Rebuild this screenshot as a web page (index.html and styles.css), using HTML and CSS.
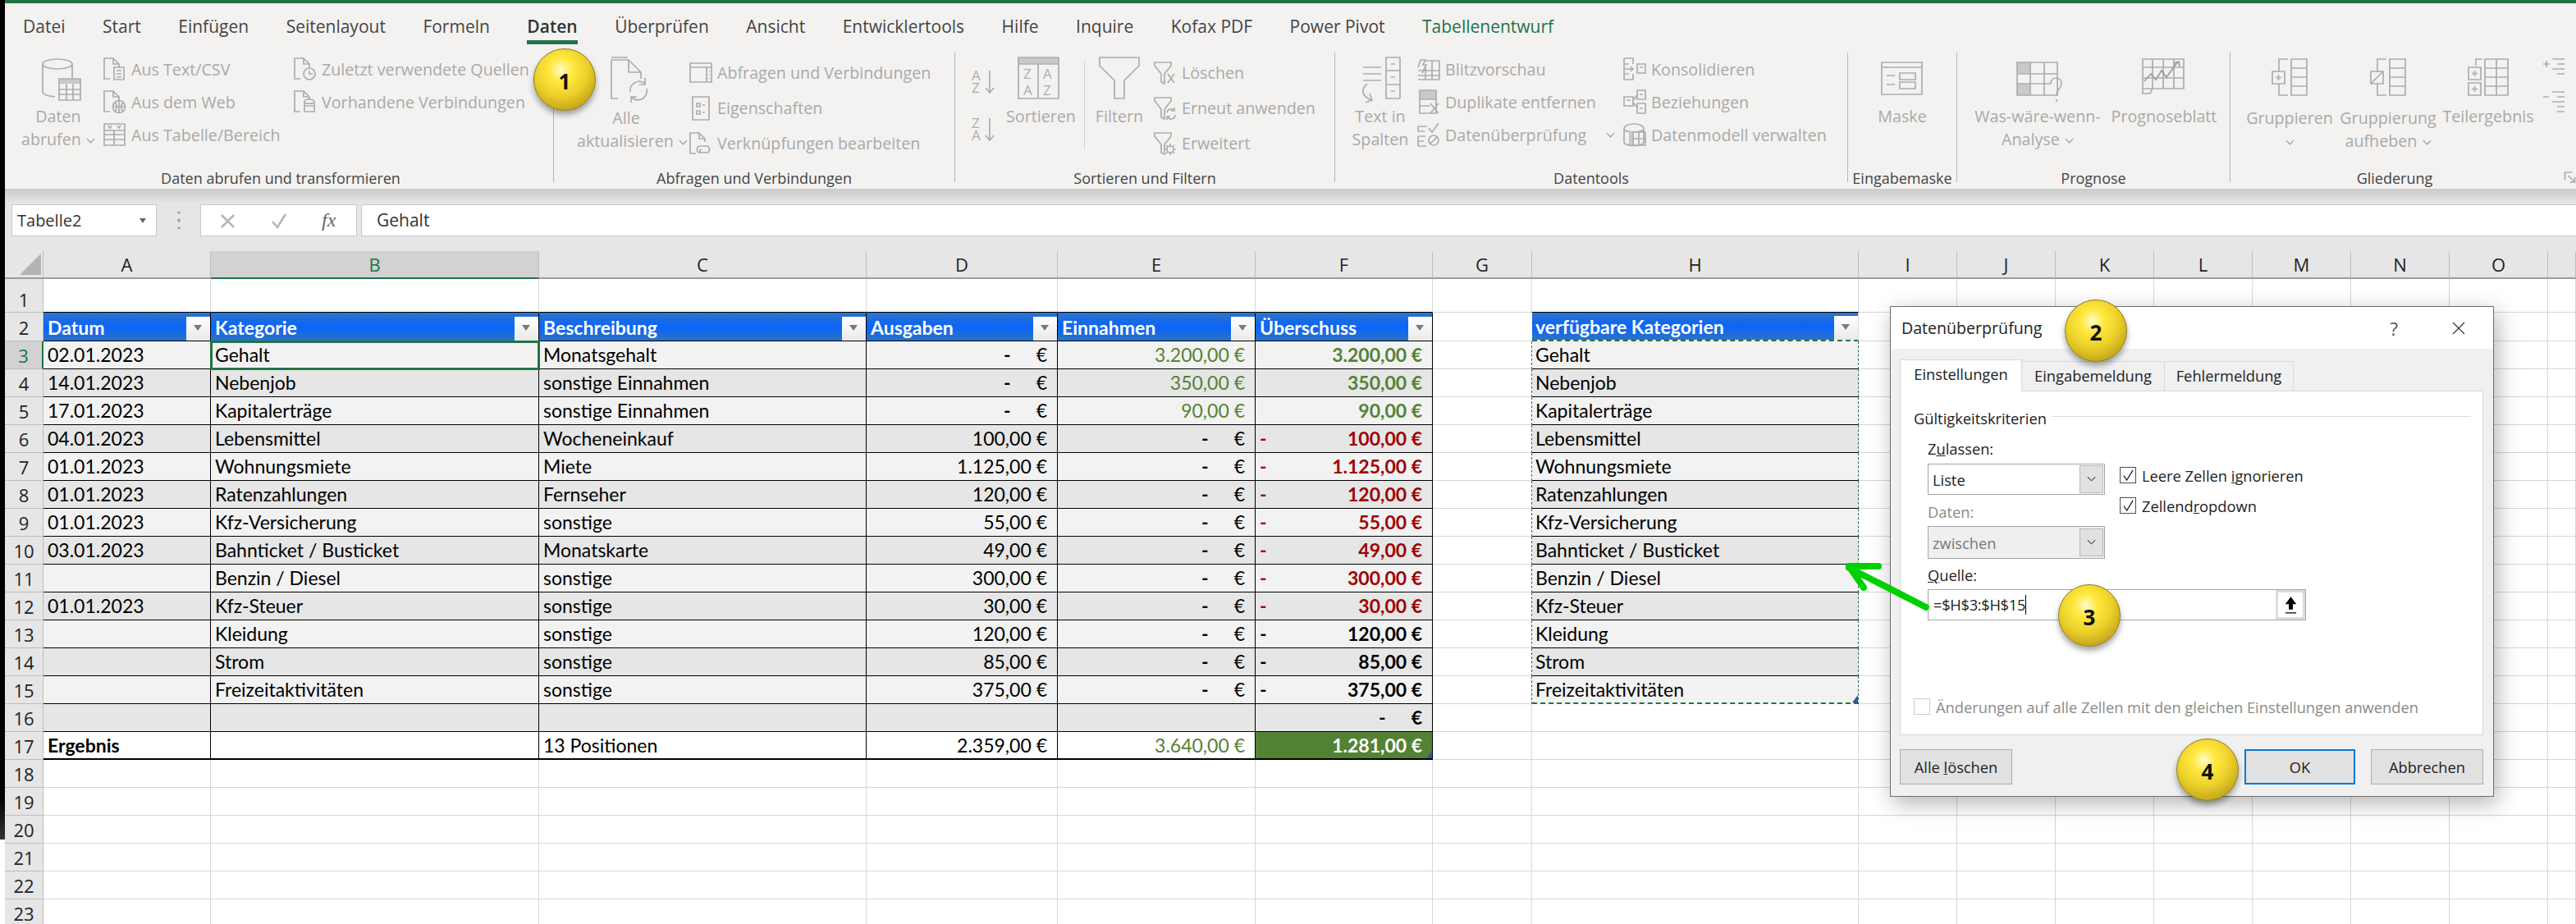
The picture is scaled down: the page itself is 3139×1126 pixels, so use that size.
FILE: index.html
```html
<!DOCTYPE html>
<html lang="de">
<head>
  <meta charset="UTF-8">
  <title>Datenüberprüfung</title>
  <link rel="stylesheet" href="styles.css">
</head>
<body>
  <!-- shared icon parts -->
  <svg class="defs">
    <defs>
      <path id="doc" d="M9 27H2V2h11l7 7v4M13 2v7h7"/>
      <path id="fun" d="M2 2h20v4l-8 10v12l-4-2V16L2 6z"/>
      <path id="bigcol" d="M30 4h19v44H30zM30 15h19M30 26h19M30 37h19"/>
    </defs>
  </svg>
  <div class="strip"></div>

  <div class="app">
    <div class="titlebar"></div>
    <nav class="tabs">
      <span>Datei</span><span>Start</span><span>Einfügen</span><span>Seitenlayout</span><span>Formeln</span>
      <span class="on">Daten</span><span>Überprüfen</span><span>Ansicht</span><span>Entwicklertools</span>
      <span>Hilfe</span><span>Inquire</span><span>Kofax PDF</span><span>Power Pivot</span><span class="ctx">Tabellenentwurf</span>
    </nav>

    <div class="ribbon">
      <section class="group g1">
        <div class="group-body">
          <div class="big w98">
            <svg class="ic" viewBox="0 0 56 58"><ellipse cx="27" cy="10" rx="18" ry="6"/><path d="M9 10v34c0 3 6 5 15 6M45 10v18"/><path class="solid" d="M29 28h26v6H29z"/><path d="M29 28h26v26H29zM29 41h26M29 47h26M38 34v20M46 34v20"/></svg>
            <div>Daten</div><div>abrufen <i class="chev"></i></div>
          </div>
          <div class="col w232 ml5">
            <div class="row"><svg class="ics" viewBox="0 0 30 30"><use href="#doc"/><path d="M14 13h12v15H14zM17 17h6M17 21h6M17 25h6"/></svg>Aus Text/CSV</div>
            <div class="row"><svg class="ics" viewBox="0 0 30 30"><use href="#doc"/><circle cx="20" cy="21" r="7.500"/><path d="M12 21h15M20 13.500v15M15 15c3 4 3 9 0 12M25 15c-3 4-3 9 0 12"/></svg>Aus dem Web</div>
            <div class="row"><svg class="ics" viewBox="0 0 30 30"><path d="M2 2h25v26H2zM2 10h25M2 15h25M2 21h25M14 10v18M7 4l2 3 2-3M18 4l2 3 2-3"/></svg>Aus Tabelle/Bereich</div>
          </div>
          <div class="col">
            <div class="row"><svg class="ics" viewBox="0 0 30 30"><use href="#doc"/><circle cx="20" cy="21" r="7"/><path d="M20 17v4h4"/></svg>Zuletzt verwendete Quellen</div>
            <div class="row"><svg class="ics" viewBox="0 0 30 30"><use href="#doc"/><path d="M14 15c0-4 12-4 12 0v12H14zM14 15c0 3 12 3 12 0M14 20h12"/></svg>Vorhandene Verbindungen</div>
          </div>
        </div>
        <div class="group-label">Daten abrufen und transformieren</div>
      </section>

      <section class="group g2">
        <div class="group-body">
          <div class="big w120 low">
            <svg class="ic" viewBox="0 0 56 58"><path d="M18 52H10V5h21l15 15v8M31 5v15h15M10 2h20"/><path d="M33 44a11 11 0 0 1 18-10M53 40a11 11 0 0 1-18 11M51 27v8h-7M34 57v-7h7"/></svg>
            <div>Alle</div><div>aktualisieren <i class="chev"></i></div>
          </div>
          <div class="col tall ml16">
            <div class="row"><svg class="ics" viewBox="0 0 30 30"><path d="M2 3h26v23H2zM2 8h26M22 8v18M25 12v1M25 17v1M25 21v1"/></svg>Abfragen und Verbindungen</div>
            <div class="row"><svg class="ics" viewBox="0 0 30 30"><path d="M5 1h20v28H5zM10 9h4v4h-4zM10 18h4v4h-4zM17 11h3M17 20h3"/></svg>Eigenschaften</div>
            <div class="row"><svg class="ics" viewBox="0 0 30 30"><use href="#doc"/><path d="M14 26c-5 0-5-8 1-8h6c6 0 6 8 1 8h-6c-3 0-3-4 0-4"/></svg>Verknüpfungen bearbeiten</div>
          </div>
        </div>
        <div class="group-label">Abfragen und Verbindungen</div>
      </section>

      <section class="group g3">
        <div class="group-body">
          <div class="sort-col">
            <svg class="ic-sort" viewBox="0 0 32 30"><text x="1" y="13">A</text><text x="1" y="28">Z</text><path d="M23 1v27M18 22l5 6 5-6"/></svg>
            <svg class="ic-sort" viewBox="0 0 32 30"><text x="1" y="13">Z</text><text x="1" y="28">A</text><path d="M23 1v27M18 22l5 6 5-6"/></svg>
          </div>
          <div class="big w80 ml11">
            <svg class="ic" viewBox="0 0 56 58"><path class="solid" d="M3 2h49v8H3z"/><path d="M3 2h49v50H3zM3 10h49M27 10v42"/><text x="9" y="28">Z</text><text x="9" y="48">A</text><text x="33" y="28">A</text><text x="33" y="48">Z</text></svg>
            <div>Sortieren</div>
          </div>
          <div class="thin"></div>
          <div class="big w76 ml4">
            <svg class="ic" viewBox="0 0 56 58"><path d="M4 2h48v10L34 30v22H22V30L4 12zM4 2"/></svg>
            <div>Filtern</div>
          </div>
          <div class="col tall ml3">
            <div class="row"><svg class="ics" viewBox="0 0 30 30"><use href="#fun"/><path d="M18 16l8 11M26 16l-8 11"/></svg>Löschen</div>
            <div class="row"><svg class="ics" viewBox="0 0 30 30"><use href="#fun"/><path d="M17 20a5 5 0 0 1 9-2M27 23a5 5 0 0 1-9 3M26 14v4h-4M17 29v-4h4"/></svg>Erneut anwenden</div>
            <div class="row"><svg class="ics" viewBox="0 0 30 30"><use href="#fun"/><circle cx="21" cy="22" r="4"/><path d="M21 15v3M21 26v3M14 22h3M25 22h3M16 17l2 2M24 25l2 2M16 27l2-2M24 19l2-2"/></svg>Erweitert</div>
          </div>
        </div>
        <div class="group-label">Sortieren und Filtern</div>
      </section>

      <section class="group g4">
        <div class="group-body">
          <div class="big w88">
            <svg class="ic" viewBox="0 0 56 58"><path d="M35 2h17v50H35zM35 18h17M35 35h17M41 10h5M41 26h5M41 43h5M7 14h22M7 22h22M7 30h22"/><path d="M12 34c-8 7-7 15 5 20M15 46l3 8-8 3"/></svg>
            <div>Text in</div><div>Spalten</div>
          </div>
          <div class="col w251">
            <div class="row"><svg class="ics" viewBox="0 0 30 30"><path d="M2 17h26M2 23h26M11 11v17M19 5v23M2 28h26M28 5v23M12 5h16M2 13l3-9h6l-3 6h4L7 20"/></svg>Blitzvorschau</div>
            <div class="row"><svg class="ics" viewBox="0 0 30 30"><path class="solid" d="M4 1h20v11H4z"/><path d="M4 1h20v28H4zM4 12h20M4 20h12M17 17l10 12M27 17L17 29"/></svg>Duplikate entfernen</div>
            <div class="row"><svg class="ics" viewBox="0 0 30 30"><path d="M2 5h11M2 11h8M2 17h9M2 23h7M2 29h10M2 5v6M2 17v12M15 7l4 5 8-11"/><circle cx="21" cy="22" r="6"/><path d="M17 26l8-8"/></svg>Datenüberprüfung <i class="chev far"></i></div>
          </div>
          <div class="col">
            <div class="row"><svg class="ics" viewBox="0 0 30 30"><path d="M2 2h11v7M2 2v26h11v-7M2 9h6M2 21h6M3 15h10M10 12l3 3-3 3M18 9h10v11H18zM21 13h4"/></svg>Konsolidieren</div>
            <div class="row"><svg class="ics" viewBox="0 0 30 30"><path d="M2 9h11v11H2zM5 13h5M18 1h10v11H18zM18 17h10v12H18zM21 6h4M21 23h4M13 13l5-6M13 16l5 6"/></svg>Beziehungen</div>
            <div class="row"><svg class="ics" viewBox="0 0 30 30"><path d="M2 8c0-8 24-8 24 0v16c0 6-24 6-24 0zM2 8c0 5 24 5 24 0M13 12h15v16H13zM20 12v16M13 20h15"/><path class="solid" d="M8 11h4v16H8z"/></svg>Datenmodell verwalten</div>
          </div>
        </div>
        <div class="group-label">Datentools</div>
      </section>

      <section class="group g5">
        <div class="group-body">
          <div class="big w130">
            <svg class="ic" viewBox="0 0 56 58"><path d="M3 8h49v39H3zM3 14h49M9 24h10M9 35h10M25 21h19v8H25zM25 32h19v8H25z"/></svg>
            <div>Maske</div>
          </div>
        </div>
        <div class="group-label">Eingabemaske</div>
      </section>

      <section class="group g6">
        <div class="group-body">
          <div class="big w170">
            <svg class="ic" viewBox="0 0 56 58"><path class="solid" d="M3 8h16v14H3zM3 34h16v14H3z"/><path d="M3 8h49v40H3zM3 22h49M3 34h42M19 8v40M36 8v40"/><path class="cut" d="M44 34c0-9 13-9 13 0 0 6-6 6-6 14M51 53v3"/></svg>
            <div>Was-wäre-wenn-</div><div>Analyse <i class="chev"></i></div>
          </div>
          <div class="big w138">
            <svg class="ic" viewBox="0 0 56 58"><path d="M2 4h50v36H2zM2 14h50M2 27h50M14 4v36M27 4v36M40 4v36M14 40l-3 6H2v-6"/><path class="dark" d="M4 31l8-9 6 7 7-11 6 8 14-19M40 9l6-2 1 6"/></svg>
            <div>Prognoseblatt</div>
          </div>
        </div>
        <div class="group-label">Prognose</div>
      </section>

      <section class="group g7">
        <div class="group-body">
          <div class="big w120 low">
            <svg class="ic" viewBox="0 0 56 58"><use href="#bigcol"/><path d="M26 4H15v16M15 34v14h11"/><path d="M7 19h15v15H7zM14.500 23v7M11 26.500h7"/></svg>
            <div>Gruppieren</div>
            <div><i class="chev"></i></div>
          </div>
          <div class="big w120 low">
            <svg class="ic" viewBox="0 0 56 58"><use href="#bigcol"/><path d="M26 4H15v16M15 34v14h11"/><path d="M7 19h15v15H7zM8 33l13-13"/></svg>
            <div>Gruppierung</div><div>aufheben <i class="chev"></i></div>
          </div>
          <div class="big w124">
            <svg class="ic" viewBox="0 0 56 58"><path d="M24 4h28v44H24zM24 15h28M24 26h28M24 37h28M38 4v44M21 4h-8v8"/><path d="M4 14h15v15H4zM4 33h15v15H4zM11.500 18v7M8 21.500h7M11.500 37v7M8 40.500h7"/></svg>
            <div>Teilergebnis</div>
          </div>
          <div class="outline-col">
            <svg class="ics" viewBox="0 0 30 30"><path d="M1 8h8M5 4v8M12 2h15M18 8h9M12 14h15M18 20h9"/></svg>
            <svg class="ics" viewBox="0 0 30 30"><path d="M1 8h7M12 2h15M18 8h9M12 14h15M18 20h9M18 26h9"/></svg>
          </div>
        </div>
        <div class="group-label">Gliederung</div>
      </section>
      <svg class="launcher" viewBox="0 0 14 14"><path d="M1 10V1h9M5 5l8 8M13 7v6H7"/></svg>
    </div>

    <div class="formula-bar">
      <div class="namebox"><span>Tabelle2</span><i class="tri"></i></div>
      <div class="grip"></div>
      <div class="fn-box">
        <svg class="fx-ic" viewBox="0 0 20 20"><path d="M2 3l15 15M17 3L2 18"/></svg>
        <svg class="fx-ic" viewBox="0 0 20 20"><path d="M2 11l6 7L18 2"/></svg>
        <em>fx</em>
      </div>
      <div class="fx-input">Gehalt</div>
    </div>

    <div class="sheet">
      <table class="grid">
        <colgroup>
          <col class="c-head"><col class="c-a"><col class="c-b"><col class="c-c"><col class="c-d"><col class="c-e"><col class="c-f"><col class="c-g"><col class="c-h">
          <col class="c-n"><col class="c-n"><col class="c-n"><col class="c-n"><col class="c-n"><col class="c-n"><col class="c-n"><col class="c-p">
        </colgroup>
        <tr class="letters">
          <th><i class="corner-tri"></i></th><th>A</th><th class="sel-h">B</th><th>C</th><th>D</th><th>E</th><th>F</th><th>G</th><th>H</th><th>I</th><th>J</th><th>K</th><th>L</th><th>M</th><th>N</th><th>O</th><th></th>
        </tr>
        <tr class="first"><th>1</th><td></td><td></td><td></td><td></td><td></td><td></td><td></td><td></td><td></td><td></td><td></td><td></td><td></td><td></td><td></td><td></td></tr>
        <tr class="hdr"><th>2</th>
          <td><div class="hd"><span>Datum</span><i class="filter"></i></div></td>
          <td><div class="hd"><span>Kategorie</span><i class="filter"></i></div></td>
          <td><div class="hd"><span>Beschreibung</span><i class="filter"></i></div></td>
          <td><div class="hd"><span>Ausgaben</span><i class="filter"></i></div></td>
          <td><div class="hd"><span>Einnahmen</span><i class="filter"></i></div></td>
          <td><div class="hd"><span>Überschuss</span><i class="filter"></i></div></td>
          <td></td>
          <td><div class="hd"><span>verfügbare Kategorien</span><i class="filter"></i></div></td>
          <td></td><td></td><td></td><td></td><td></td><td></td><td></td><td></td></tr>
        <tr class="lt ants"><th class="sel-r">3</th><td class="sel-l">02.01.2023</td><td class="sel-c">Gehalt</td><td>Monatsgehalt</td><td class="n"><b>-</b><i class="gap"></i>€</td><td class="n pos">3.200,00 €</td><td class="n strong pos">3.200,00 €</td><td></td><td>Gehalt</td><td></td><td></td><td></td><td></td><td></td><td></td><td></td><td></td></tr>
        <tr class="dk ants"><th>4</th><td>14.01.2023</td><td>Nebenjob</td><td>sonstige Einnahmen</td><td class="n"><b>-</b><i class="gap"></i>€</td><td class="n pos">350,00 €</td><td class="n strong pos">350,00 €</td><td></td><td>Nebenjob</td><td></td><td></td><td></td><td></td><td></td><td></td><td></td><td></td></tr>
        <tr class="lt ants"><th>5</th><td>17.01.2023</td><td>Kapitalerträge</td><td>sonstige Einnahmen</td><td class="n"><b>-</b><i class="gap"></i>€</td><td class="n pos">90,00 €</td><td class="n strong pos">90,00 €</td><td></td><td>Kapitalerträge</td><td></td><td></td><td></td><td></td><td></td><td></td><td></td><td></td></tr>
        <tr class="dk ants"><th>6</th><td>04.01.2023</td><td>Lebensmittel</td><td>Wocheneinkauf</td><td class="n">100,00 €</td><td class="n"><b>-</b><i class="gap"></i>€</td><td class="n strong neg"><span class="sign">-</span>100,00 €</td><td></td><td>Lebensmittel</td><td></td><td></td><td></td><td></td><td></td><td></td><td></td><td></td></tr>
        <tr class="lt ants"><th>7</th><td>01.01.2023</td><td>Wohnungsmiete</td><td>Miete</td><td class="n">1.125,00 €</td><td class="n"><b>-</b><i class="gap"></i>€</td><td class="n strong neg"><span class="sign">-</span>1.125,00 €</td><td></td><td>Wohnungsmiete</td><td></td><td></td><td></td><td></td><td></td><td></td><td></td><td></td></tr>
        <tr class="dk ants"><th>8</th><td>01.01.2023</td><td>Ratenzahlungen</td><td>Fernseher</td><td class="n">120,00 €</td><td class="n"><b>-</b><i class="gap"></i>€</td><td class="n strong neg"><span class="sign">-</span>120,00 €</td><td></td><td>Ratenzahlungen</td><td></td><td></td><td></td><td></td><td></td><td></td><td></td><td></td></tr>
        <tr class="lt ants"><th>9</th><td>01.01.2023</td><td>Kfz-Versicherung</td><td>sonstige</td><td class="n">55,00 €</td><td class="n"><b>-</b><i class="gap"></i>€</td><td class="n strong neg"><span class="sign">-</span>55,00 €</td><td></td><td>Kfz-Versicherung</td><td></td><td></td><td></td><td></td><td></td><td></td><td></td><td></td></tr>
        <tr class="dk ants"><th>10</th><td>03.01.2023</td><td>Bahnticket / Busticket</td><td>Monatskarte</td><td class="n">49,00 €</td><td class="n"><b>-</b><i class="gap"></i>€</td><td class="n strong neg"><span class="sign">-</span>49,00 €</td><td></td><td>Bahnticket / Busticket</td><td></td><td></td><td></td><td></td><td></td><td></td><td></td><td></td></tr>
        <tr class="lt ants"><th>11</th><td></td><td>Benzin / Diesel</td><td>sonstige</td><td class="n">300,00 €</td><td class="n"><b>-</b><i class="gap"></i>€</td><td class="n strong neg"><span class="sign">-</span>300,00 €</td><td></td><td>Benzin / Diesel</td><td></td><td></td><td></td><td></td><td></td><td></td><td></td><td></td></tr>
        <tr class="dk ants"><th>12</th><td>01.01.2023</td><td>Kfz-Steuer</td><td>sonstige</td><td class="n">30,00 €</td><td class="n"><b>-</b><i class="gap"></i>€</td><td class="n strong neg"><span class="sign">-</span>30,00 €</td><td></td><td>Kfz-Steuer</td><td></td><td></td><td></td><td></td><td></td><td></td><td></td><td></td></tr>
        <tr class="lt ants"><th>13</th><td></td><td>Kleidung</td><td>sonstige</td><td class="n">120,00 €</td><td class="n"><b>-</b><i class="gap"></i>€</td><td class="n strong"><span class="sign">-</span>120,00 €</td><td></td><td>Kleidung</td><td></td><td></td><td></td><td></td><td></td><td></td><td></td><td></td></tr>
        <tr class="dk ants"><th>14</th><td></td><td>Strom</td><td>sonstige</td><td class="n">85,00 €</td><td class="n"><b>-</b><i class="gap"></i>€</td><td class="n strong"><span class="sign">-</span>85,00 €</td><td></td><td>Strom</td><td></td><td></td><td></td><td></td><td></td><td></td><td></td><td></td></tr>
        <tr class="lt ants ants-end"><th>15</th><td></td><td>Freizeitaktivitäten</td><td>sonstige</td><td class="n">375,00 €</td><td class="n"><b>-</b><i class="gap"></i>€</td><td class="n strong"><span class="sign">-</span>375,00 €</td><td></td><td class="mark">Freizeitaktivitäten</td><td></td><td></td><td></td><td></td><td></td><td></td><td></td><td></td></tr>
        <tr class="dk"><th>16</th><td></td><td></td><td></td><td></td><td></td><td class="n strong"><b>-</b><i class="gap"></i>€</td><td></td><td></td><td></td><td></td><td></td><td></td><td></td><td></td><td></td><td></td></tr>
        <tr class="sum"><th>17</th><td class="strong">Ergebnis</td><td></td><td>13 Positionen</td><td class="n">2.359,00 €</td><td class="n pos">3.640,00 €</td><td class="n strong total mark">1.281,00 €</td><td></td><td></td><td></td><td></td><td></td><td></td><td></td><td></td><td></td><td></td></tr>
        <tr><th>18</th><td></td><td></td><td></td><td></td><td></td><td></td><td></td><td></td><td></td><td></td><td></td><td></td><td></td><td></td><td></td><td></td></tr>
        <tr><th>19</th><td></td><td></td><td></td><td></td><td></td><td></td><td></td><td></td><td></td><td></td><td></td><td></td><td></td><td></td><td></td><td></td></tr>
        <tr><th>20</th><td></td><td></td><td></td><td></td><td></td><td></td><td></td><td></td><td></td><td></td><td></td><td></td><td></td><td></td><td></td><td></td></tr>
        <tr><th>21</th><td></td><td></td><td></td><td></td><td></td><td></td><td></td><td></td><td></td><td></td><td></td><td></td><td></td><td></td><td></td><td></td></tr>
        <tr><th>22</th><td></td><td></td><td></td><td></td><td></td><td></td><td></td><td></td><td></td><td></td><td></td><td></td><td></td><td></td><td></td><td></td></tr>
        <tr><th>23</th><td></td><td></td><td></td><td></td><td></td><td></td><td></td><td></td><td></td><td></td><td></td><td></td><td></td><td></td><td></td><td></td></tr>
      </table>
    </div>
  </div>

  <div class="dialog">
    <div class="dlg-title">
      <span class="dlg-name">Datenüberprüfung</span>
      <span class="dlg-help">?</span>
      <svg class="dlg-close" viewBox="0 0 16 16"><path d="M1 1l14 14M15 1L1 15"/></svg>
    </div>
    <div class="dlg-body">
      <div class="dlg-tabs">
        <span class="dlg-tab active">Einstellungen</span><span class="dlg-tab t2">Eingabemeldung</span><span class="dlg-tab t3">Fehlermeldung</span>
      </div>
      <div class="panel">
        <div class="legend"><span>Gültigkeitskriterien</span></div>
        <div class="form">
          <div class="form-left">
            <div class="lbl">Z<u>u</u>lassen:</div>
            <div class="select"><span>Liste</span><i class="sel-btn"><svg viewBox="0 0 12 8"><path d="M1 1l5 5 5-5"/></svg></i></div>
            <div class="lbl off mt9">Daten:</div>
            <div class="select disabled"><span>zwischen</span><i class="sel-btn"><svg viewBox="0 0 12 8"><path d="M1 1l5 5 5-5"/></svg></i></div>
          </div>
          <div class="form-right">
            <label class="check"><i class="box"><svg viewBox="0 0 16 16"><path d="M2 8l4 6 8-13"/></svg></i><span>Leere Zellen <u>i</u>gnorieren</span></label>
            <label class="check"><i class="box"><svg viewBox="0 0 16 16"><path d="M2 8l4 6 8-13"/></svg></i><span>Zellend<u>r</u>opdown</span></label>
          </div>
        </div>
        <div class="lbl source-label"><u>Q</u>uelle:</div>
        <div class="source">
          <span class="source-text">=$H$3:$H$15</span>
          <i class="pick"><svg viewBox="0 0 16 22"><path d="M8 1L2 9h4v7h4V9h4zM1 21h14" /></svg></i>
        </div>
        <label class="check apply off"><i class="box"></i><span>Änderungen auf alle Zellen mit den gleichen Einstellungen anwenden</span></label>
      </div>
      <div class="dlg-foot">
        <button class="btn">Alle <u>l</u>öschen</button>
        <button class="btn ok">OK</button>
        <button class="btn">Abbrechen</button>
      </div>
    </div>
  </div>

  <svg class="arrow" viewBox="0 0 120 70"><path d="M102 56L8 8M8 6H44M8 6L26 32"/></svg>

  <div class="badge b1">1</div>
  <div class="badge b2">2</div>
  <div class="badge b3">3</div>
  <div class="badge b4">4</div>
</body>
</html>
```

FILE: styles.css
```css
:root {
  --ui: "Open Sans", "Noto Sans", sans-serif;
  --cell: Lato, "Liberation Sans", sans-serif;
  --green: #217346;
  --off: #a9a9a9;
  --line: #b4b4b4;
}
* { box-sizing: border-box; }
html, body {
  margin: 0; padding: 0;
  width: 3139px; height: 1126px;
  overflow: hidden;
  background: #fff;
  font-family: var(--ui);
  color: #333;
}
.defs { position: absolute; width: 0; height: 0; }
.strip {
  position: absolute; left: 0; top: 0;
  width: 6px; height: 1023px;
  background: linear-gradient(#000 95%, #333);
}
.app { margin-left: 6px; }
.titlebar { height: 4px; background: var(--green); }

/* tabs */
.tabs {
  height: 60px;
  background: #f3f2f1;
  display: flex; gap: 45.500px;
  padding: 12px 0 0 22px;
  font-size: 21px; line-height: 32px;
  color: #444;
  white-space: nowrap;
}
.tabs span { height: 38px; }
.tabs .on { font-weight: 600; color: #333; border-bottom: 5px solid var(--green); }
.tabs .ctx { color: var(--green); }

/* ribbon */
.ribbon {
  height: 166px;
  background: #f3f2f1;
  display: flex;
  padding-left: 4px;
  position: relative;
  font-size: 19.700px;
  color: var(--off);
}
.group {
  height: 158px;
  border-right: 1px solid var(--line);
  flex: none;
}
.g1 { width: 665px; }
.g2 { width: 489px; }
.g3 { width: 463px; }
.g4 { width: 625px; }
.g5 { width: 133px; }
.g6 { width: 333px; }
.g7 { width: 400px; border-right: 0; }
.group-body { height: 139px; display: flex; }
.g1 .group-body { padding-left: 12px; }
.g2 .group-body { padding-left: 28px; }
.g3 .group-body { padding-left: 19px; }
.g4 .group-body { padding-left: 11px; }
.g5 .group-body { padding-left: 1px; }
.g6 .group-body { padding-left: 13px; }
.g7 .group-body { padding-left: 12px; }
.group-label {
  height: 19px;
  line-height: 28px;
  text-align: center;
  color: #444;
  font-size: 18px;
  white-space: nowrap;
}
.big {
  flex: none;
  text-align: center;
  line-height: 28px;
  white-space: nowrap;
}
.big .ic { display: block; width: 56px; height: 58px; margin: 4px auto 2px; overflow: visible; }
.big.low .ic { margin-bottom: 4px; }
.w76 { width: 76px; } .w80 { width: 80px; } .w88 { width: 88px; } .w98 { width: 98px; }
.w120 { width: 120px; } .w124 { width: 124px; } .w130 { width: 130px; } .w138 { width: 138px; } .w170 { width: 170px; }
.w232 { width: 232px; flex: none; } .w251 { width: 251px; flex: none; }
.ml3 { margin-left: 3px; } .ml4 { margin-left: 4px; } .ml5 { margin-left: 5px; } .ml11 { margin-left: 11px; } .ml16 { margin-left: 16px; }
.col { flex: none; }
.row { display: flex; align-items: center; gap: 5px; height: 40px; white-space: nowrap; }
.col.tall { padding-top: 3px; }
.col.tall .row { height: 43px; }
.ic, .ics, .ic-sort, .launcher { fill: none; stroke: #adadad; stroke-width: 1.7; }
.ics { width: 30px; height: 30px; flex: none; overflow: visible; }
.ic text, .ic-sort text { fill: #adadad; stroke: none; font: 17px var(--ui); }
.solid { fill: #c9c9c9; stroke: none; }
.dark { stroke: #9a9a9a; }
.chev {
  display: inline-block; width: 7px; height: 7px;
  border: solid #8f8f8f; border-width: 0 1.5px 1.5px 0;
  transform: rotate(45deg);
  margin: 0 2px 4px 3px;
}
.chev.far { margin-left: 21px; flex: none; }
.sort-col { display: flex; flex-direction: column; gap: 28px; padding-top: 21px; flex: none; }
.ic-sort { width: 32px; height: 30px; overflow: visible; }
.thin { width: 1px; height: 108px; margin: 10px 0 0 15px; background: #cfcfcf; flex: none; }
.outline-col { display: flex; flex-direction: column; gap: 10px; padding-top: 6px; margin-left: 4px; }
.launcher { position: absolute; left: 3118px; top: 145px; width: 15px; height: 14px; }

/* formula bar */
.formula-bar {
  height: 76px;
  background: linear-gradient(#cbcbcb, #e6e6e6 18px);
  display: flex;
  padding: 19px 0 18px 8px;
  font-size: 20px;
}
.namebox {
  width: 177px; background: #fff; border: 1px solid #c8c8c8;
  display: flex; align-items: center; justify-content: space-between;
  padding: 0 12px 0 6px;
  color: #333;
}
.tri { border: 4px solid transparent; border-top: 6px solid #666; border-bottom: 0; }
.grip {
  width: 53px;
  background: radial-gradient(circle, #999 1.5px, transparent 2px) center / 4px 10px repeat-y;
  background-clip: content-box;
  padding: 9px 0;
}
.fn-box {
  width: 191px; background: #fff; border: 1px solid #c8c8c8;
  display: flex; align-items: center; gap: 42px;
  padding-left: 23px;
}
.fx-ic { width: 20px; height: 20px; fill: none; stroke: #b5b5b5; stroke-width: 2.500; flex: none; }
.fn-box em { font: italic 24px "Liberation Serif", serif; color: #666; }
.fx-input {
  flex: 1; margin-left: 5px;
  background: #fff; border: 1px solid #c8c8c8; border-right: 0;
  padding-left: 18px; line-height: 36px; color: #333;
  font-size: 21px;
}

/* sheet */
.sheet { height: 820px; overflow: hidden; }
.grid {
  table-layout: fixed;
  border-collapse: separate; border-spacing: 0;
  width: 3133px;
  font: 23px/30px var(--cell);
  color: #000;
}
.c-head { width: 47px; } .c-a { width: 204px; } .c-b { width: 400px; } .c-c { width: 399px; } .c-d { width: 233px; }
.c-e { width: 241px; } .c-f { width: 216px; } .c-g { width: 121px; } .c-h { width: 398px; } .c-n { width: 120px; } .c-p { width: 34px; }
tr { height: 34px; }
th {
  background: #e6e6e6;
  font: 400 22px/30px var(--ui);
  color: #222;
  padding: 1px 0 0;
  border-bottom: 1px solid #bdbdbd;
  border-right: 1px solid #bdbdbd;
  text-align: center;
}
td {
  padding: 0 5px 1px;
  border-right: 1px solid #d6d6d6;
  border-bottom: 1px solid #d6d6d6;
  white-space: nowrap;
  overflow: hidden;
}
td:nth-child(9) { padding-left: 4px; }
.letters th { border-bottom: 2px solid #9c9c9c; padding-top: 0; }
.letters th.sel-h { background: #d2d2d2; color: var(--green); border-bottom-color: var(--green); }
.corner-tri {
  display: block; margin: 0 0 0 18px;
  width: 0; height: 0;
  border-left: 26px solid transparent;
  border-bottom: 26px solid #b4b4b4;
}
.first { height: 41px; }
.first th { vertical-align: bottom; }
.first td:nth-child(-n+7), .first td:nth-child(9) { border-bottom-color: #000; }

.hdr td:nth-child(-n+7), .hdr td:nth-child(9) {
  background: linear-gradient(#2e75c6, #0a64fb 50%, #2c72c4);
  border-bottom-color: #000;
  border-right-color: #000;
  padding: 0 0 0 5px;
  color: #fff;
  font-weight: 700;
}
.hdr td:nth-child(8) { border-right: 0; }
.hdr td:nth-child(9) {
  border-bottom: 2px dashed var(--green);
  border-right-color: #d6d6d6;
  background-clip: padding-box;
  padding-left: 4px;
}
.hd { display: flex; justify-content: space-between; align-items: flex-end; height: 33px; line-height: 32px; }
.filter {
  width: 29px; height: 29px; flex: none;
  background: linear-gradient(#fff, #e9e9e9);
  position: relative;
}
.filter::after {
  content: ""; position: absolute; left: 9px; top: 10px;
  border: 5px solid transparent; border-top: 7px solid #7a7a7a; border-bottom: 0;
}

.lt td:nth-child(-n+7), .dk td:nth-child(-n+7), .sum td:nth-child(-n+7) { border-color: #000; }
.lt td:nth-child(-n+7), .ants.lt td:nth-child(9) { background: #f2f2f2; }
.dk td:nth-child(-n+7), .ants.dk td:nth-child(9) { background: #e6e6e6; }
.ants td:nth-child(9) { border-bottom-color: #000; border-right: 1px dashed var(--green); }
.ants td:nth-child(8) { border-right: 1px dashed var(--green); }
.ants-end td:nth-child(9) { border-bottom: 2px dashed var(--green); background-clip: padding-box; }
.sum td:nth-child(-n+7) { border-bottom-width: 2px; }

.n { text-align: right; padding-right: 12px; }
.n b { font-weight: 700; }
.gap { display: inline-block; width: 31px; }
.strong { font-weight: 700; }
.pos { color: #548235; }
.neg { color: #a00000; }
.sign { float: left; }
.sum td.total { background: #548235; color: #fff; }
.mark { position: relative; }
.mark::after {
  content: ""; position: absolute; right: 0; bottom: 0;
  border: solid transparent; border-width: 0 0 9px 7px; border-bottom-color: #3a50b0;
}
.sel-r { background: #d2d2d2; color: var(--green); border-right: 2px solid var(--green); }
.sel-c {
  position: relative;
  outline: 3px solid var(--green);
  outline-offset: -2px;
  box-shadow: inset 0 0 0 2px #fff;
}

/* dialog */
.dialog {
  position: absolute; left: 2303px; top: 373px;
  width: 736px; height: 598px;
  background: #f0f0f0;
  border: 1px solid #6e6e6e;
  box-shadow: 4px 8px 26px rgba(0,0,0,.3);
  font-size: 18.300px; color: #222;
}
.dlg-title {
  height: 51px; background: #fff;
  display: flex; align-items: center;
  padding: 0 61px 0 13px;
  font-size: 19.600px;
}
.dlg-name { flex: 1; }
.dlg-help { color: #555; margin-right: 66px; font-size: 22px; }
.dlg-close { width: 16px; height: 16px; fill: none; stroke: #333; stroke-width: 1.2; margin-right: -27px; }
.dlg-body { padding: 13px 12px 0 11px; }
.dlg-tabs { display: flex; align-items: flex-end; height: 39px; margin-bottom: -1px; position: relative; }
.dlg-tab {
  height: 37px; line-height: 34px; text-align: center;
  border: 1px solid #d9d9d9; border-left: 0;
  background: #f0f0f0;
}
.dlg-tab.active { width: 149px; height: 39px; background: #fff; border-left: 1px solid #d9d9d9; border-bottom: 0; }
.dlg-tab.t2 { width: 174px; }
.dlg-tab.t3 { width: 157px; }
.panel {
  height: 420px; background: #fff;
  border: 1px solid #d9d9d9;
  padding: 20px 14px 0 16px;
}
.legend { display: flex; align-items: center; gap: 6px; height: 24px; white-space: nowrap; }
.legend::after { content: ""; flex: 1; height: 1px; background: #dcdcdc; margin-top: -3px; }
.form { display: flex; gap: 18px; margin: 14px 0 0 17px; }
.form-left { width: 216px; flex: none; }
.form-right { padding-top: 32px; display: flex; flex-direction: column; gap: 13px; }
.lbl { height: 24px; line-height: 24px; }
.lbl.mt9 { margin-top: 9px; }
.off { color: #8a8a8a; }
.select {
  height: 38px; margin-top: 6px;
  border: 1px solid #a6a6a6; background: #fff;
  display: flex; align-items: center; justify-content: space-between;
  padding: 0 1px 0 5px;
}
.select.disabled { height: 40px; margin-top: 5px; background: #efefef; color: #777; }
.sel-btn {
  width: 29px; height: 34px;
  background: #e1e1e1; border: 1px solid #b8b8b8;
  display: flex; align-items: center; justify-content: center;
}
.sel-btn svg { width: 11px; height: 8px; fill: none; stroke: #555; stroke-width: 1.2; }
.check { display: flex; align-items: center; gap: 7px; height: 24px; white-space: nowrap; }
.box { width: 20px; height: 20px; flex: none; border: 1px solid #4d4d4d; background: #fff; display: flex; align-items: center; justify-content: center; }
.box svg { width: 15px; height: 15px; fill: none; stroke: #222; stroke-width: 1.4; }
.source-label { margin: 8px 0 0 17px; }
.source {
  margin: 5px 0 0 17px; width: 461px; height: 38px;
  border: 1px solid #a6a6a6;
  display: flex; justify-content: space-between; align-items: center;
  padding-left: 6px;
}
.source-text { border-right: 1px solid #000; line-height: 24px; letter-spacing: -.3px; }
.pick { width: 36px; height: 36px; background: #fff; border: 3px solid #dcdcdc; display: flex; align-items: center; justify-content: center; }
.pick svg { width: 15px; height: 21px; fill: #000; stroke: #000; stroke-width: 1.2; }
.apply { margin-top: 93px; }
.apply .box { border-color: #cfcfcf; }
.dlg-foot { display: flex; gap: 19px; margin-top: 17px; height: 43px; }
.btn {
  width: 137px; height: 43px;
  background: #e1e1e1; border: 1px solid #adadad;
  font: 18.300px var(--ui); color: #222;
  padding: 0;
}
.btn.ok { width: 135px; margin-left: auto; border: 2px solid #0078d7; }

.arrow {
  position: absolute; left: 2245px; top: 684px;
  width: 120px; height: 70px;
  fill: none; stroke: #00cf00; stroke-width: 8; stroke-linecap: round;
}

/* yellow markers */
.badge {
  position: absolute;
  width: 76px; height: 76px; border-radius: 50%;
  background: radial-gradient(circle at 44% 34%, #fffbd0 0, #ffe93f 22%, #ecd02a 50%, #c3a51c 78%, #9b8312 100%);
  border: 1px solid #8e7a12;
  box-shadow: 0 5px 7px rgba(0,0,0,.35);
  display: flex; align-items: center; justify-content: center;
  padding-top: 3px;
  font: 700 26px var(--ui); color: #111;
}
.b1 { left: 650px; top: 59px; }
.b2 { left: 2516px; top: 365px; }
.b3 { left: 2508px; top: 712px; }
.b4 { left: 2652px; top: 900px; }
```
